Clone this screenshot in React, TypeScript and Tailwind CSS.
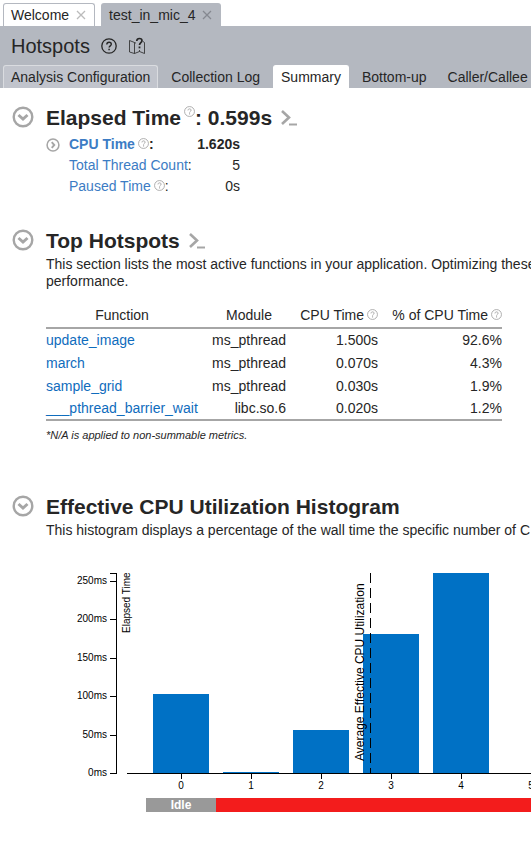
import type { ReactNode } from "react";

function HelpIcon({ className }: { className: string }) {
  return (
    <svg viewBox="0 0 16 16" className={className} fill="none" stroke="currentColor" aria-hidden="true">
      <circle cx="8" cy="8" r="7.2" strokeWidth="1.3" />
      <path d="M5.8 6.4c0-1.4 1-2.2 2.3-2.2s2.200.8 2.200 2c0 1.6-2.200 1.7-2.200 3.4" strokeWidth="1.400" />
      <path d="M8.1 10.7v1.6" strokeWidth="1.5" />
    </svg>
  );
}

function MapHelpIcon() {
  return (
    <svg viewBox="0 0 18 18" className="h-[18px] w-[18px]" fill="none" stroke="currentColor" aria-hidden="true">
      <path
        d="M8 6.200 6.500 5.500 1.500 3.500v11.500L6.500 16.500l5-2 5 2V5.500l-1.500-1M6.500 5.500v11M11.500 13v1.500"
        strokeWidth="0.8"
      />
      <path d="M8.700 4C8.900 2.400 9.900 1.500 11.400 1.500s2.600.800 2.600 2.200c0 1.900-2.500 2.100-2.500 4.300" strokeWidth="1.700" />
      <path d="M11.500 9.500v1.800" strokeWidth="1.800" />
    </svg>
  );
}

function CloseIcon({ className }: { className: string }) {
  return (
    <svg viewBox="0 0 10 10" className={className} stroke="currentColor" strokeWidth="1.3" aria-hidden="true">
      <path d="M1 1l8 8M9 1l-8 8" />
    </svg>
  );
}

function CircleChevron({ className, open }: { className: string; open: boolean }) {
  return (
    <svg viewBox="0 0 22 22" className={className} fill="none" stroke="#a6a6a6" aria-hidden="true">
      <circle cx="11" cy="11" r="9.3" strokeWidth="2.4" />
      <path d={open ? "M6.500 9l4.500 4 4.500-4" : "M9 6.500l4 4.500-4 4.500"} strokeWidth="3" />
    </svg>
  );
}

function PromptIcon() {
  return (
    <svg viewBox="0 0 16 16" className="h-4 w-4" fill="none" stroke="#a6a6a6" aria-hidden="true">
      <path d="M1 1l7 6.500L1 14" strokeWidth="2.600" />
      <path d="M8 14.500h8" strokeWidth="2" />
    </svg>
  );
}

function Section({ title, children }: { title: ReactNode; children: ReactNode }) {
  return (
    <section className="flex gap-3 pl-3">
      <button type="button" aria-label="Collapse section" className="h-[22px] w-[22px] shrink-0">
        <CircleChevron open className="h-[22px] w-[22px]" />
      </button>
      <div className="min-w-0 flex-1">
        <h2 className="flex h-6 items-center whitespace-nowrap text-[21px] font-bold leading-6">{title}</h2>
        {children}
      </div>
    </section>
  );
}

function PromptButton() {
  return (
    <button type="button" aria-label="Copy command" className="ml-[9px]">
      <PromptIcon />
    </button>
  );
}

const resultTabs = ["Analysis Configuration", "Collection Log", "Summary", "Bottom-up", "Caller/Callee"];

const tabStyles: Record<string, string> = {
  "Analysis Configuration": "border-[#dadce0] bg-[#c1c4cc]",
  Summary: "border-white bg-white",
};

const hotspots = [
  ["update_image", "ms_pthread", "1.500s", "92.6%"],
  ["march", "ms_pthread", "0.070s", "4.3%"],
  ["sample_grid", "ms_pthread", "0.030s", "1.9%"],
  ["___pthread_barrier_wait", "libc.so.6", "0.020s", "1.2%"],
];

const bars = [
  { threads: 0, height: 79 },
  { threads: 1, height: 1 },
  { threads: 2, height: 43 },
  { threads: 3, height: 139 },
  { threads: 4, height: 200 },
  { threads: 5, height: 0 },
];

const ticks = [
  { label: "250ms", y: 8 },
  { label: "200ms", y: 46 },
  { label: "150ms", y: 85 },
  { label: "100ms", y: 123 },
  { label: "50ms", y: 162 },
  { label: "0ms", y: 200 },
];

function Histogram() {
  return (
    <svg className="mt-[34px] block h-60 w-full" role="img" aria-label="Effective CPU Utilization Histogram">
      <g shapeRendering="crispEdges">
        {bars.map((bar) => (
          <rect key={bar.threads} x={107 + bar.threads * 70} y={200 - bar.height} width="56" height={bar.height} fill="#0071c5" />
        ))}
        <path d="M64 .5h6.500v200H64M81 200.500h500" fill="none" stroke="#000" />
        {ticks.map((tick) => (
          <path key={tick.label} d={`M64 ${tick.y + 0.5}h6`} stroke="#000" />
        ))}
        {bars.map((bar) => (
          <path key={bar.threads} d={`M${135.5 + bar.threads * 70} 200v6`} stroke="#000" />
        ))}
        <path d="M324.500 0v200" stroke="#000" strokeDasharray="10 5" />
        <rect x="100" y="225" width="70" height="14" fill="#999" />
        <rect x="170" y="225" width="500" height="14" fill="#f31c1c" />
      </g>
      <g fontSize="10" textAnchor="end">
        {ticks.map((tick) => (
          <text key={tick.label} x="61" y={tick.y + 3}>
            {tick.label}
          </text>
        ))}
      </g>
      <g fontSize="10" textAnchor="middle">
        {bars.map((bar) => (
          <text key={bar.threads} x={135 + bar.threads * 70} y="216">
            {bar.threads}
          </text>
        ))}
      </g>
      <text transform="translate(84 60) rotate(-90)" fontSize="10">
        Elapsed Time
      </text>
      <text transform="translate(318 188) rotate(-90)" fontSize="12">
        Average Effective CPU Utilization
      </text>
      <text x="135" y="236" fontSize="12" fontWeight="bold" fill="#fff" textAnchor="middle">
        Idle
      </text>
    </svg>
  );
}

export default function App() {
  return (
    <div className="min-h-screen overflow-hidden bg-white font-['Liberation_Sans',Arial,sans-serif] text-sm text-[#262626]">
      <nav className="flex gap-[6px] px-[3px] pt-[3px]" aria-label="Open results">
        <div className="flex h-[23px] items-center gap-[7px] rounded-t-[3px] border border-b-0 border-[#b4b8c0] pl-[7px] pr-2">
          <button type="button">Welcome</button>
          <button type="button" aria-label="Close Welcome" className="text-[#bbb]">
            <CloseIcon className="h-[10px] w-[10px]" />
          </button>
        </div>
        <div className="flex h-[23px] items-center gap-[7px] rounded-t-[3px] bg-[#b4b8c0] pl-2 pr-[9px]">
          <button type="button">test_in_mic_4</button>
          <button type="button" aria-label="Close test_in_mic_4" className="text-[#858890]">
            <CloseIcon className="h-[10px] w-[10px]" />
          </button>
        </div>
      </nav>

      <header className="bg-[#b4b8c0]">
        <div className="flex h-[39px] items-center pl-[11px]">
          <h1 className="text-xl">Hotspots</h1>
          <button type="button" aria-label="Help" className="ml-[11px]">
            <HelpIcon className="h-4 w-4" />
          </button>
          <button type="button" aria-label="Guided tour" className="ml-[11px]">
            <MapHelpIcon />
          </button>
        </div>
        <div className="flex gap-[5px] pl-[3px]">
          {resultTabs.map((tab) => (
            <button
              key={tab}
              type="button"
              className={`h-[23px] whitespace-nowrap rounded-t-[3px] border border-b-0 px-[7px] ${tabStyles[tab] ?? "border-transparent"}`}
            >
              {tab}
            </button>
          ))}
        </div>
      </header>

      <main className="flex flex-col pt-[18px]">
        <Section
          title={
            <>
              Elapsed Time
              <HelpIcon className="mb-[14px] ml-[3px] h-[11px] w-[11px] text-[#a6a6a6]" />: 0.599s
              <PromptButton />
            </>
          }
        >
          <dl className="mt-1 grid w-[194px] grid-cols-[23px_1fr_auto] leading-[21px]">
            <button type="button" aria-label="Expand CPU Time" className="self-center">
              <CircleChevron open={false} className="h-[14px] w-[14px]" />
            </button>
            <dt className="flex items-center font-bold">
              <span className="text-[#3c7cc4]">CPU Time</span>
              <HelpIcon className="mb-[3px] ml-[3px] h-[11px] w-[11px] text-[#a6a6a6]" />:
            </dt>
            <dd className="text-right font-bold">1.620s</dd>
            <dt className="col-start-2">
              <span className="text-[#3c7cc4]">Total Thread Count</span>:
            </dt>
            <dd className="text-right">5</dd>
            <dt className="col-start-2 flex items-center">
              <span className="text-[#3c7cc4]">Paused Time</span>
              <HelpIcon className="mb-[3px] ml-[3px] h-[11px] w-[11px] text-[#a6a6a6]" />:
            </dt>
            <dd className="text-right">0s</dd>
          </dl>
        </Section>

        <div className="mt-8">
          <Section
            title={
              <>
                Top Hotspots
                <PromptButton />
              </>
            }
          >
            <p className="mt-[3px] whitespace-nowrap leading-[17px]">
              This section lists the most active functions in your application. Optimizing these
              <br />
              performance.
            </p>
            <table className="mt-3 w-[456px] table-fixed border-collapse border-b-2 border-[#a6a6a6]">
              <colgroup>
                <col className="w-[152px]" />
                <col className="w-[88px]" />
                <col className="w-[92px]" />
                <col className="w-[124px]" />
              </colgroup>
              <thead>
                <tr className="h-[26px] whitespace-nowrap border-b-2 border-[#a6a6a6]">
                  <th className="p-0 font-normal">Function</th>
                  <th className="p-0 pl-[14px] font-normal">Module</th>
                  {["CPU Time", "% of CPU Time"].map((name) => (
                    <th key={name} className="p-0 font-normal">
                      <span className="flex items-center justify-end gap-[3px]">
                        {name}
                        <HelpIcon className="h-[11px] w-[11px] text-[#a6a6a6]" />
                      </span>
                    </th>
                  ))}
                </tr>
              </thead>
              <tbody>
                {hotspots.map(([name, module, time, share]) => (
                  <tr key={name} className="h-[23px] text-right">
                    <td className="p-0 text-left">
                      <a href="#bottom-up" className="text-[#0f6cbd]">
                        {name}
                      </a>
                    </td>
                    <td className="p-0">{module}</td>
                    <td className="p-0">{time}</td>
                    <td className="p-0">{share}</td>
                  </tr>
                ))}
              </tbody>
            </table>
            <p className="mt-[6px] text-[11px] italic leading-4">*N/A is applied to non-summable metrics.</p>
          </Section>
        </div>

        <div className="mt-[52px]">
          <Section title="Effective CPU Utilization Histogram">
            <p className="mt-[3px] whitespace-nowrap leading-[17px]">
              This histogram displays a percentage of the wall time the specific number of C
            </p>
            <Histogram />
          </Section>
        </div>
      </main>
    </div>
  );
}
